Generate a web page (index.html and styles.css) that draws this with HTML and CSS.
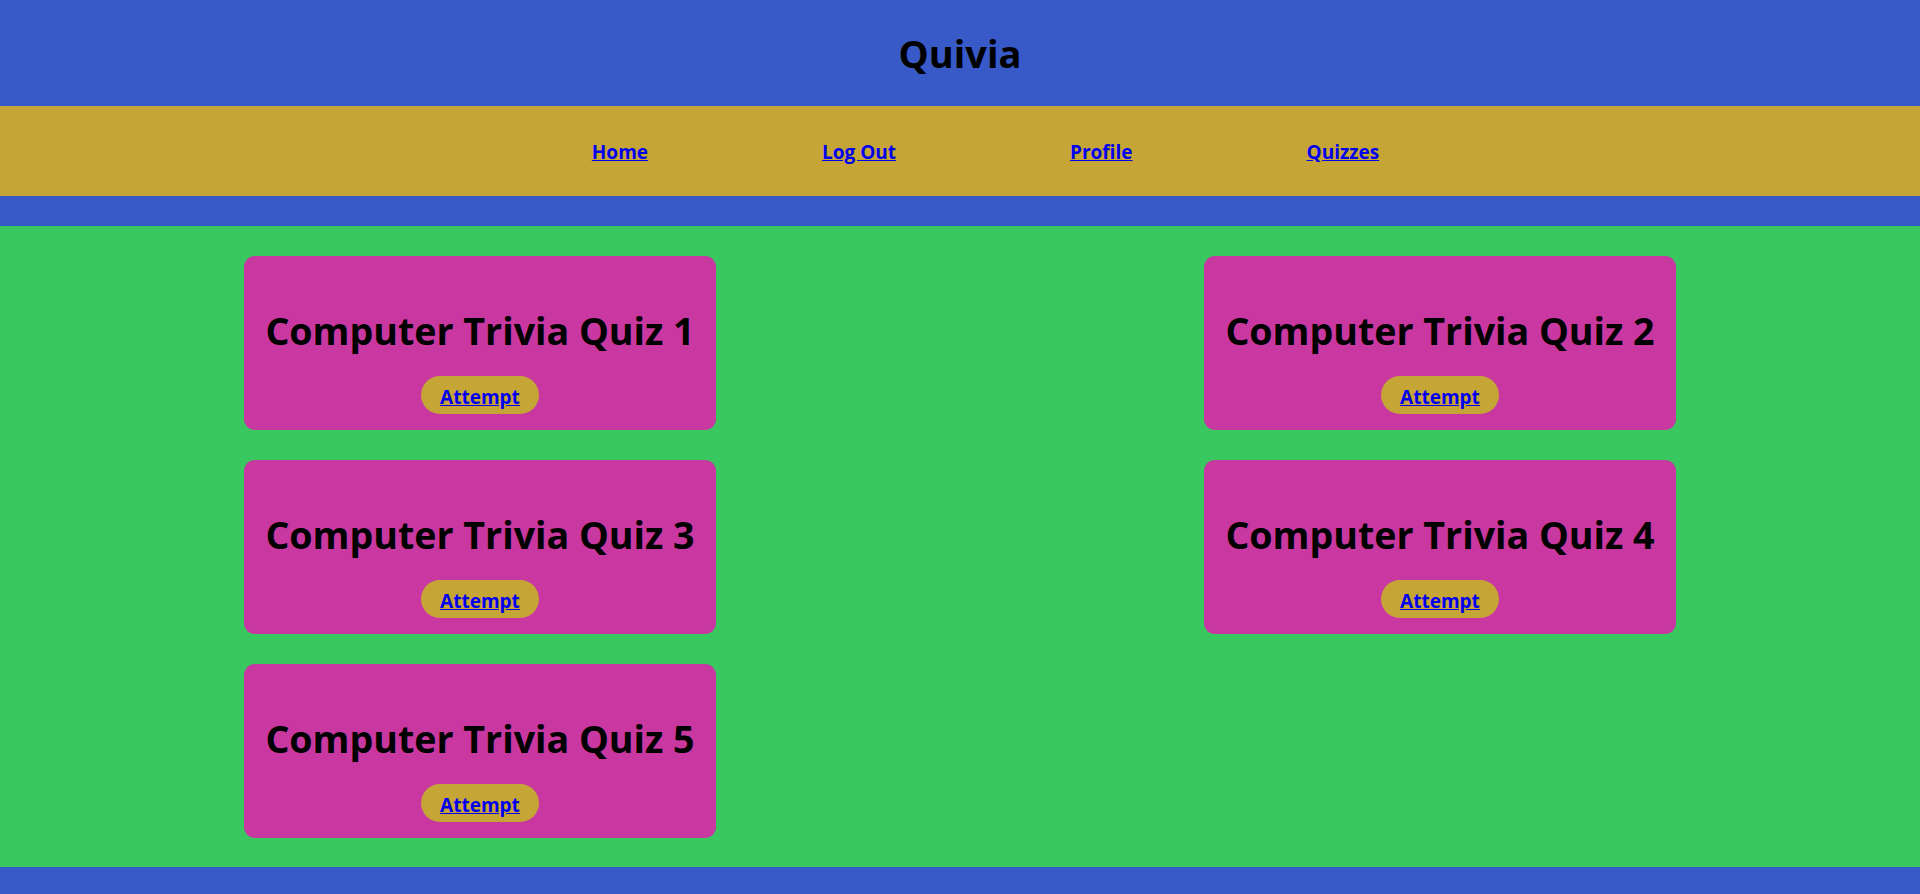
FILE: index.html
```html
<!DOCTYPE html>
<html lang="en">
<head>
<meta charset="utf-8">
<title>Quivia</title>
<link rel="stylesheet" href="styles.css">
</head>
<body>
<header class="site-header">
  <h1 class="brand">Quivia</h1>
</header>
<nav class="site-nav">
  <a href="#">Home</a>
  <a href="#">Log Out</a>
  <a href="#">Profile</a>
  <a href="#">Quizzes</a>
</nav>
<main class="quiz-grid">
  <div class="quiz-card">
    <h2 class="quiz-title">Computer Trivia Quiz 1</h2>
    <div class="attempt"><a href="#">Attempt</a></div>
  </div>
  <div class="quiz-card">
    <h2 class="quiz-title">Computer Trivia Quiz 2</h2>
    <div class="attempt"><a href="#">Attempt</a></div>
  </div>
  <div class="quiz-card">
    <h2 class="quiz-title">Computer Trivia Quiz 3</h2>
    <div class="attempt"><a href="#">Attempt</a></div>
  </div>
  <div class="quiz-card">
    <h2 class="quiz-title">Computer Trivia Quiz 4</h2>
    <div class="attempt"><a href="#">Attempt</a></div>
  </div>
  <div class="quiz-card">
    <h2 class="quiz-title">Computer Trivia Quiz 5</h2>
    <div class="attempt"><a href="#">Attempt</a></div>
  </div>
</main>
<footer class="site-footer"></footer>
</body>
</html>
```

FILE: styles.css
```css
html, body {
  margin: 0;
  padding: 0;
}

body {
  background: #3859c8;
  font-family: "Open Sans", "Noto Sans", sans-serif;
  color: #000;
  min-height: 894px;
}

.site-header {
  padding: 27px 0;
  text-align: center;
}

.brand {
  margin: 0;
  font-size: 38px;
  line-height: 52px;
  font-weight: 700;
}

.site-nav {
  background: #c6a537;
  padding: 33px 0 31px 51px;
  display: flex;
  justify-content: center;
  gap: 174px;
  font-size: 19px;
  line-height: 26px;
  font-weight: 700;
}

.site-nav a,
.attempt a {
  color: #0000ee;
  text-decoration: underline;
}

.quiz-grid {
  margin-top: 30px;
  background: #38c85f;
  padding: 30px 0 29px;
  display: grid;
  grid-template-columns: 1fr 1fr;
  justify-items: center;
  row-gap: 30px;
}

.quiz-card {
  width: 472px;
  height: 174px;
  box-sizing: border-box;
  background: #c838a0;
  border-radius: 11px;
  padding: 49px 0 16px;
  display: flex;
  flex-direction: column;
  align-items: center;
}

.quiz-title {
  margin: 0;
  font-size: 37.6px;
  line-height: 52px;
  font-weight: 700;
  white-space: nowrap;
}

.attempt {
  margin-top: 19px;
  background: #c6a537;
  border-radius: 19px;
  padding: 8px 19px 4px;
  font-size: 19px;
  line-height: 26px;
  font-weight: 700;
}

.site-footer {
  height: 27px;
}
```
